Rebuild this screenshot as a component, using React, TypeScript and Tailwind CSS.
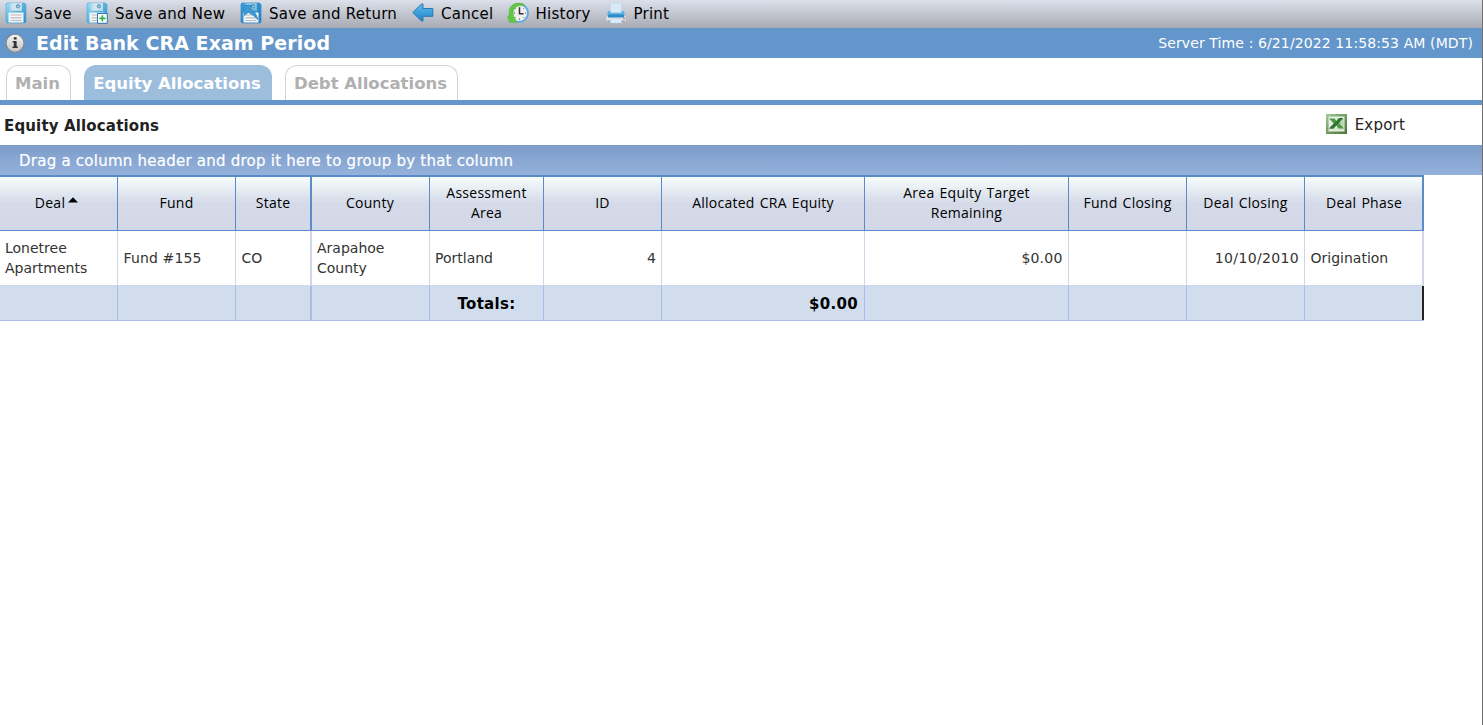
import React from "react";

function SaveIcon({ variant }: { variant?: "new" | "return" }) {
  const dark = variant === "return";
  return (
    <svg width="22" height="22" viewBox="0 0 22 22" className="block shrink-0">
      <defs>
        <linearGradient id={dark ? "sd" : "sl"} x1="0" y1="0" x2="1" y2="1">
          <stop offset="0" stopColor={dark ? "#3c9fd8" : "#9bdcf8"} />
          <stop offset="0.5" stopColor={dark ? "#2f8fce" : "#58b0e0"} />
          <stop offset="1" stopColor={dark ? "#2a80c2" : "#2f86c4"} />
        </linearGradient>
      </defs>
      <path d="M1 2L2 1H19.5L21 2.5V20L20 21H2L1 20Z" fill={`url(#${dark ? "sd" : "sl"})`} stroke={dark ? "#2a86c4" : "#56a9d8"} strokeWidth="0.7" />
      <path d="M4.5 1H17V9H4.5Z" fill={dark ? "#6fb6dc" : "#b4dbec"} />
      <path d="M7 1.5H16V6Q12 9.5 7 7Z" fill={dark ? "#8cc3df" : "#d3e6ee"} />
      <circle cx="13" cy="4.3" r="1.7" fill="#9fc4d8" stroke="#4a8db5" strokeWidth="0.9" />
      <path d="M3.5 10.5H18.5V20.5H3.5Z" fill="#f4f5f6" />
      <path d="M5.5 13H16.5M5.5 15.8H16.5M5.5 18.5H16.5" stroke="#b5bdc2" strokeWidth="1.2" />
      {variant === "new" && (
        <g>
          <path d="M11.5 11.5H21.3V21.3H11.5Z" fill="#fff" stroke="#2f74b0" strokeWidth="1" />
          <path d="M16.4 13.3V19.5M13.3 16.4H19.5" stroke="#2fae45" strokeWidth="1.6" />
        </g>
      )}
      {dark && (
        <path d="M3.5 3.5H12.5L10 6.3Q15.5 9.5 18 17.5Q13 12.5 8.3 10.2L4.5 13.5Z" fill="#3b9ad6" stroke="#2c83c1" strokeWidth="0.8" />
      )}
    </svg>
  );
}

function CancelIcon() {
  return (
    <svg width="22" height="22" viewBox="0 0 22 22" className="block shrink-0">
      <defs>
        <linearGradient id="cg" x1="0" y1="0" x2="0" y2="1">
          <stop offset="0" stopColor="#5bb9ec" />
          <stop offset="1" stopColor="#2384c6" />
        </linearGradient>
      </defs>
      <path d="M0.8 10.5L9.5 2H11V6.5H20.8V14.3H11V19H9.5Z" fill="url(#cg)" stroke="#2a79b2" strokeWidth="1" strokeLinejoin="round" />
    </svg>
  );
}

function HistoryIcon() {
  return (
    <svg width="22" height="22" viewBox="0 0 22 22" className="block shrink-0">
      <circle cx="12" cy="11" r="9" fill="#eef0f0" stroke="#62a9dc" strokeWidth="2" />
      <path d="M17 2.2Q13 0.2 8 1.5C3 3.5 1.2 8 2.5 13L0.5 14.5L2.5 20.5L9.5 20.8L8.5 17.5C5.5 13 5.5 8 9 5Q12.5 2.5 17 4Z" fill="#62c640" stroke="#58ad43" strokeWidth="0.4" />
      <path d="M12.5 5.2V11.8H16.5" fill="none" stroke="#333" strokeWidth="1.5" />
      <path d="M18 11H19M12.5 16.5V17.8M7 11H8M16.5 6.8L17.2 6.1M16.5 15.2L17.2 15.9M8.5 6.8L7.9 6.1M8.5 15.2L7.9 15.9" stroke="#555" />
    </svg>
  );
}

function PrintIcon() {
  return (
    <svg width="22" height="22" viewBox="0 0 22 22" className="block shrink-0">
      <path d="M5.5 1H16.5V11H5.5Z" fill="#d7eaf8" stroke="#bdd3e3" strokeWidth="0.6" />
      <path d="M1 15L3 11H19L21 15V19.5H1Z" fill="#e3e5ea" stroke="#a9b1bb" strokeWidth="0.6" />
      <path d="M2.5 10.5Q2.5 9 4 9H5.5V11H16.5V9H18Q19.5 9 19.5 10.5V14.5H2.5Z" fill="#58b2e5" />
      <path d="M3 12.5H19V15.5H3Z" fill="#2c8bc9" />
      <path d="M2.5 18.5H19.5V19.8H2.5Z" fill="#9a9ea5" />
      <path d="M6 17H16L17 21H5Z" fill="#dceefb" stroke="#b4cbdb" strokeWidth="0.5" />
      <path d="M18 15.8H20V17.3H18Z" fill="#ef7349" />
    </svg>
  );
}

function InfoIcon() {
  return (
    <svg width="20" height="20" viewBox="0 0 20 20" className="block shrink-0">
      <defs>
        <linearGradient id="ig" x1="0" y1="0" x2="0" y2="1">
          <stop offset="0" stopColor="#f6f6f6" />
          <stop offset="1" stopColor="#c2c2c2" />
        </linearGradient>
      </defs>
      <circle cx="10" cy="10.3" r="9" fill="url(#ig)" stroke="#858585" strokeWidth="1.1" />
      <path d="M8.8 4.2H11.6V6.6H8.8ZM7.6 8H11.6V13.5H12.8V15H7.5V13.5H8.8V9.5H7.6Z" fill="#333" />
    </svg>
  );
}

function ExcelIcon() {
  return (
    <svg width="21" height="20" viewBox="0 0 21 20" className="block shrink-0">
      <defs>
        <linearGradient id="xg" x1="0" y1="0" x2="1" y2="1">
          <stop offset="0" stopColor="#a3cb99" />
          <stop offset="0.5" stopColor="#6f9d62" />
          <stop offset="1" stopColor="#4f7336" />
        </linearGradient>
      </defs>
      <path d="M0 0H21V20H0Z" fill="url(#xg)" />
      <path d="M2.5 2.5H18.5V17.5H2.5Z" fill="#e6efe2" />
      <path d="M11 4H17.5V14.5H11Z" fill="#a9cd9e" />
      <path d="M3 15H18M12 7.5H18M12 11H18M15.5 4V16" stroke="#c3dabb" strokeWidth="0.8" />
      <path d="M3 4.5H8.5L11 7.3L13.5 4H17L13 9.2L18 14.5H13L10.3 11.5L7.5 14.5H3L7.8 9.5Z" fill="#4b9a45" />
      <path d="M13.5 4H17L7.5 14.5H3Z" fill="#2f7436" />
    </svg>
  );
}

const actions = [
  { label: "Save", icon: <SaveIcon />, box: "w-[81px]" },
  { label: "Save and New", icon: <SaveIcon variant="new" />, box: "w-[154px]" },
  { label: "Save and Return", icon: <SaveIcon variant="return" />, box: "w-[172px]" },
  { label: "Cancel", icon: <CancelIcon />, box: "w-[94.5px]" },
  { label: "History", icon: <HistoryIcon />, box: "w-[98px]" },
  { label: "Print", icon: <PrintIcon />, box: "w-[80px]" },
];

const headers: { label: React.ReactNode; cls: string }[] = [
  { label: "Deal", cls: "border-r pr-[4px]" },
  { label: "Fund", cls: "border-r" },
  { label: "State", cls: "border-r-2" },
  { label: "County", cls: "border-r pr-px" },
  { label: <>Assessment<br />Area</>, cls: "border-r" },
  { label: "ID", cls: "border-r" },
  { label: "Allocated CRA Equity", cls: "border-r" },
  { label: <>Area Equity Target<br />Remaining</>, cls: "border-r" },
  { label: "Fund Closing", cls: "border-r" },
  { label: "Deal Closing", cls: "border-r" },
  { label: "Deal Phase", cls: "border-r-2 pl-px" },
];

const row: { value: React.ReactNode; cls: string }[] = [
  { value: <>Lonetree<br />Apartments</>, cls: "border-r pl-[5px]" },
  { value: "Fund #155", cls: "border-r pl-[5.5px] tracking-[0.15px]" },
  { value: "CO", cls: "border-r-2 pl-[5.5px]" },
  { value: <>Arapahoe<br />County</>, cls: "border-r pl-[5px]" },
  { value: "Portland", cls: "border-r pl-[5px]" },
  { value: "4", cls: "border-r pr-[5px] justify-end" },
  { value: "", cls: "border-r" },
  { value: "$0.00", cls: "border-r pr-[5.5px] justify-end tracking-[0.2px]" },
  { value: "", cls: "border-r" },
  { value: "10/10/2010", cls: "border-r pr-[5px] justify-end tracking-[0.35px]" },
  { value: "Origination", cls: "border-r-2 pl-[5.5px]" },
];

const totals = [
  { value: "", cls: "border-r border-r-[#a9bde6]" },
  { value: "", cls: "border-r border-r-[#a9bde6]" },
  { value: "", cls: "border-r-2 border-r-[#a9bde6]" },
  { value: "", cls: "border-r border-r-[#a9bde6]" },
  { value: "Totals:", cls: "border-r border-r-[#a9bde6] justify-center" },
  { value: "", cls: "border-r border-r-[#a9bde6]" },
  { value: "$0.00", cls: "border-r border-r-[#a9bde6] justify-end pr-[6px]" },
  { value: "", cls: "border-r border-r-[#a9bde6]" },
  { value: "", cls: "border-r border-r-[#a9bde6]" },
  { value: "", cls: "border-r border-r-[#a9bde6]" },
  { value: "", cls: "border-r-2 border-r-[#222]" },
];

const cols = "grid grid-cols-[118px_118px_76px_118px_114px_118px_203px_204px_118px_118px_119px] w-[1424px]";

export default function App() {
  return (
    <div className="flex h-[725px] w-[1483px] overflow-hidden bg-white font-['Verdana','DejaVu_Sans',sans-serif] text-[#222]">
      <div className="flex w-[1482px] flex-col">
        <div className="flex h-7 shrink-0 items-center bg-linear-to-b from-[#dce0ea] to-[#a8abb3] pl-[5px] text-[15px] tracking-[0.25px] text-black">
          {actions.map((a) => (
            <div key={a.label} className={`flex h-7 shrink-0 items-center gap-[7px] whitespace-nowrap pb-[3px] ${a.box}`}>
              {a.icon}
              <span className="pt-[3px]">{a.label}</span>
            </div>
          ))}
        </div>
        <div className="flex h-[30px] shrink-0 items-center bg-[#6396ca] pr-[9px] pl-[5px] text-white">
          <InfoIcon />
          <h1 className="ml-[11px] text-[19px] font-bold tracking-[0.06px] whitespace-nowrap">Edit Bank CRA Exam Period</h1>
          <span className="ml-auto pt-px text-[14px] tracking-[0.11px] whitespace-nowrap">Server Time : 6/21/2022 11:58:53 AM (MDT)</span>
        </div>
        <div className="flex h-[47px] shrink-0 items-end border-b-[5px] border-[#6396ca] pl-1.5 text-[16.5px] font-bold whitespace-nowrap">
          <div className="flex h-[35px] w-[65px] items-center justify-center rounded-t-[12px] border border-b-0 border-[#d3d3d3] pr-[2px] pt-[2px] text-[#b0b0b0]">Main</div>
          <div className="ml-[13px] flex h-[35px] w-[188px] items-center justify-center rounded-t-[12px] bg-[#9dbddd] pr-[2px] pt-[3px] text-white">Equity Allocations</div>
          <div className="ml-[13px] flex h-[35px] w-[173px] items-center justify-center rounded-t-[12px] border border-b-0 border-[#d3d3d3] pr-[2px] pt-[2px] text-[#b0b0b0]">Debt Allocations</div>
        </div>
        <div className="flex h-10 shrink-0 items-center pl-1">
          <h2 className="pt-[2px] text-[15px] font-bold tracking-[0.15px]">Equity Allocations</h2>
          <div className="mr-[77px] ml-auto flex items-center gap-[8px] pb-[2px] text-[15px] tracking-[0.2px]">
            <ExcelIcon />
            <span className="pt-[2px]">Export</span>
          </div>
        </div>
        <div className="flex h-[30px] shrink-0 items-center bg-linear-to-b from-[#7c9dc8] to-[#95b1dc] pt-[2px] pl-[19px] text-[15px] tracking-[0.24px] text-white [-webkit-text-stroke:0.2px_white]">
          <span>Drag a column header and drop it here to group by that column</span>
        </div>
        <div className={`${cols} h-14 border-t-2 border-b border-[#5c8bc9] bg-linear-to-b from-[#f7fdfc] via-[#d4dae8] via-50% to-[#d2d8e7] font-['Trebuchet_MS','Open_Sans',sans-serif] text-[14px] leading-5 tracking-[0.25px] [word-spacing:1.2px] text-black`}>
          {headers.map((h, i) => (
            <div key={i} className={`flex items-center justify-center border-[#5c8bc9] pb-[2px] text-center whitespace-nowrap ${h.cls}`}>
              <span>{h.label}</span>
              {i === 0 && (
                <svg width="10" height="6" viewBox="0 0 10 6" className="mb-[5px] ml-[3px]">
                  <path d="M0 5.5L5 0.3L10 5.5Z" fill="#000" />
                </svg>
              )}
            </div>
          ))}
        </div>
        <div className={`${cols} h-[55px] border-b border-[#cfd8e6] text-[14px] leading-5 text-[#333]`}>
          {row.map((c, i) => (
            <div key={i} className={`flex items-center border-[#cfd5e6] whitespace-nowrap ${c.cls}`}>
              <span>{c.value}</span>
            </div>
          ))}
        </div>
        <div className={`${cols} h-[35px] border-b border-[#a9bde6] bg-[#d1dded] text-[15px] font-bold tracking-[0.3px] text-black`}>
          {totals.map((c, i) => (
            <div key={i} className={`flex items-center pt-[2px] whitespace-nowrap ${c.cls}`}>
              <span>{c.value}</span>
            </div>
          ))}
        </div>
      </div>
      <div className="w-px bg-[#707070]" />
    </div>
  );
}
